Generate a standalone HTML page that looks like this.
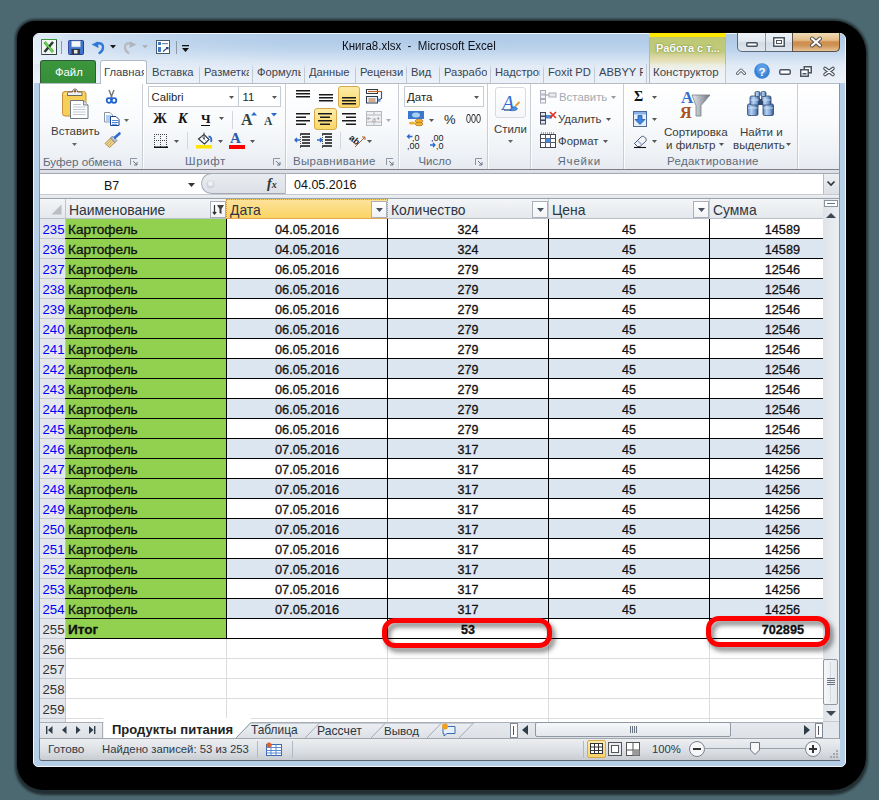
<!DOCTYPE html><html><head><meta charset="utf-8"><style>
*{margin:0;padding:0;box-sizing:border-box}
html,body{width:879px;height:800px;overflow:hidden;background:#4c6870;font-family:"Liberation Sans",sans-serif}
.a{position:absolute}
.t{position:absolute;white-space:nowrap;line-height:1}
svg{position:absolute;overflow:visible}
</style></head><body><div class="a" style="left:15px;top:19px;width:853px;height:776px;background:rgba(0,0,0,.55);border-radius:20px 34px 36px 28px;filter:blur(.8px)"></div>
<div class="a" style="left:17px;top:21px;width:849px;height:769px;background:#000;border-radius:18px 32px 34px 26px"></div>
<div class="a" style="left:33px;top:33px;width:813px;height:734px;background:#b6cfe9;border-radius:6px 6px 5px 5px;border:1px solid #f2f6fb"></div>
<div class="a" style="left:34px;top:34px;width:811px;height:49px;background:linear-gradient(#afcae7 0,#b3cde9 9px,#bfd5ed 17px,#d0e0f1 24px,#e2ebf6 32px,#edf2f9 49px);border-radius:5px 5px 0 0"></div>
<div class="a" style="left:34px;top:34px;width:811px;height:30px;background:linear-gradient(90deg,rgba(235,242,250,.85) 0,rgba(235,242,250,.55) 40px,rgba(235,242,250,.2) 150px,rgba(235,242,250,0) 260px);border-radius:5px 5px 0 0"></div>
<svg style="left:41px;top:39px" width="16" height="16" viewBox="0 0 16 16"><rect x="0.5" y="0.5" width="15" height="15" fill="#f4f6f4" stroke="#3a9a3a"/><path d="M15.5 1V15.5H1" fill="none" stroke="#2d4040"/><path d="M3.5 3L12 13" stroke="#46b246" stroke-width="2.8"/><path d="M12 3L3.5 13" stroke="#2a3d36" stroke-width="2.6"/><path d="M4 3.5L11.5 12.5" stroke="#7bd85a" stroke-width="1.2"/></svg>
<div class="a" style="left:61px;top:41px;width:1px;height:13px;background:#8e9aa6"></div>
<svg style="left:68px;top:40px" width="16" height="15" viewBox="0 0 16 15"><rect x="0.5" y="0.5" width="15" height="14" rx="1" fill="#3f74cf" stroke="#1f3f8f"/><rect x="3.5" y="1" width="9" height="6" fill="#f4f7fb" stroke="#8fa8d0" stroke-width=".6"/><rect x="3.5" y="9" width="8.5" height="5.5" fill="#33383f"/><rect x="6" y="10" width="3.5" height="3.5" fill="#e8e8e8"/><path d="M1 1V14" stroke="#a070e0" stroke-width=".8" opacity=".6"/></svg>
<svg style="left:91px;top:41px" width="14" height="13" viewBox="0 0 14 13"><path d="M6 2.5C10 1.5 12.5 3.5 12 7C11.6 9.8 10 11.2 8.5 12" fill="none" stroke="#2f78d8" stroke-width="2.4" stroke-linecap="round"/><path d="M0.5 3.5L7 0.5L7.5 7Z" fill="#2f78d8"/></svg>
<svg style="left:110px;top:45px" width="6" height="4" viewBox="0 0 6 4"><path d="M0 0H6L3 3.5Z" fill="#1a1a1a"/></svg>
<svg style="left:123px;top:41px" width="14" height="13" viewBox="0 0 14 13"><path d="M8 2.5C4 1.5 1.5 3.5 2 7C2.4 9.8 4 11.2 5.5 12" fill="none" stroke="#b8bcc2" stroke-width="2.4" stroke-linecap="round"/><path d="M13.5 3.5L7 0.5L6.5 7Z" fill="#b0b5bc"/></svg>
<svg style="left:142px;top:45px" width="6" height="4" viewBox="0 0 6 4"><path d="M0 0H6L3 3.5Z" fill="#aab2ba"/></svg>
<svg style="left:156px;top:40px" width="14" height="14" viewBox="0 0 14 14"><rect x="0.5" y="0.5" width="13" height="13" fill="#fff" stroke="#4a5a6a"/><rect x="2" y="2" width="3" height="3" fill="#3a78c8"/><rect x="6" y="3" width="6" height="1.2" fill="#7a8aa0"/><rect x="2" y="7" width="3" height="5" fill="#3a78c8"/><path d="M7 11.5L12 7.5M10 7.5H12V9.5" stroke="#2a4a80" fill="none" stroke-width="1.1"/></svg>
<div class="a" style="left:176px;top:41px;width:1px;height:13px;background:#8e9aa6"></div>
<svg style="left:182px;top:45px" width="7" height="8" viewBox="0 0 7 8"><rect x="0" y="0" width="7" height="1.3" fill="#111"/><path d="M0 3H7L3.5 7Z" fill="#111"/></svg>
<div class="t" style="left:341.5px;top:40px;font-size:12.5px;color:#0c1018;font-weight:normal;transform:scaleX(.92);transform-origin:0 0">Книга8.xlsx&nbsp; - &nbsp;Microsoft Excel</div>
<div class="a" style="left:649px;top:33px;width:77px;height:4px;background:#ffe800"></div>
<div class="a" style="left:649px;top:37px;width:77px;height:46px;background:linear-gradient(#bdc874 0,#c1cb7b 15px,#d2d39a 18px,#e1dcae 22px,#e6e2c0 25px,#eceee0 28px,#eef1f2 33px,#f1f4f7 46px)"></div>
<div class="a" style="left:649px;top:37px;width:1px;height:46px;background:#b5c080"></div>
<div class="a" style="left:725px;top:37px;width:1px;height:46px;background:#b5c080"></div>
<div class="t" style="left:656px;top:42.5px;font-size:11px;color:#fff;font-weight:bold;text-shadow:0 0 2px #7d8c3a,0 0 1px #7d8c3a">Работа с т...</div>
<div class="a" style="left:737px;top:33px;width:103px;height:19px;background:linear-gradient(#eef2f7,#e3e9f0 45%,#d3dce6 55%,#dfe6ee);border:1px solid #5f6b78;border-top:none;border-radius:0 0 5px 5px"></div>
<div class="a" style="left:765px;top:33px;width:1px;height:18px;background:#8a96a4"></div>
<div class="a" style="left:792px;top:33px;width:48px;height:19px;background:linear-gradient(#efdcb4,#e4bd88 40%,#cf8c4c 50%,#cf9458 70%,#e6c496);border:1px solid #5f5048;border-top:none;border-radius:0 0 5px 0"></div>
<svg style="left:746px;top:42px" width="12" height="5" viewBox="0 0 12 5"><rect x="0.75" y="0.75" width="10.5" height="3.5" rx="1" fill="#fff" stroke="#4a5560" stroke-width="1.5"/></svg>
<svg style="left:773px;top:37px" width="12" height="10" viewBox="0 0 12 10"><rect x="0.75" y="0.75" width="10.5" height="8.5" fill="#fff" stroke="#4a5560" stroke-width="1.5"/><rect x="3.5" y="3.5" width="5" height="3" fill="#fff" stroke="#4a5560"/></svg>
<svg style="left:810px;top:37px" width="12" height="10" viewBox="0 0 12 10"><path d="M2 1.5L10 8.5M10 1.5L2 8.5" stroke="#4a4a50" stroke-width="4" stroke-linecap="round"/><path d="M2 1.5L10 8.5M10 1.5L2 8.5" stroke="#fff" stroke-width="2.2" stroke-linecap="round"/></svg>
<div class="a" style="left:40px;top:60px;width:56px;height:24px;background:linear-gradient(#3c963d,#358e38);border:1px solid #2f5a3a;border-bottom:none;border-radius:3px 3px 0 0"></div>
<div class="t" style="left:55px;top:66.5px;font-size:11.3px;color:#fff;font-weight:normal;">Файл</div>
<div class="a" style="left:39px;top:83px;width:801px;height:87px;background:linear-gradient(#ffffff 0,#f8fafc 40px,#eef1f5 70px,#e6eaf0 86px);border:1px solid #8f949b;border-top:1px solid #b6bcc6;border-bottom:1px solid #7f7d86;border-radius:0"></div>
<div class="a" style="left:100px;top:60px;width:47px;height:24px;background:#fff;border:1px solid #b6bcc6;border-bottom:none;border-radius:3px 3px 0 0"></div>
<div class="t" style="left:104px;top:66.5px;font-size:11.3px;color:#3a4450;font-weight:normal;"><span style="display:inline-block;width:40px;overflow:hidden">Главная</span></div>
<div class="t" style="left:152px;top:66.5px;font-size:11.2px;color:#3a4450;font-weight:normal;"><span style="display:inline-block;width:44px;overflow:hidden">Вставка</span></div>
<div class="a" style="left:199px;top:64px;width:1px;height:19px;background:linear-gradient(rgba(180,190,205,0),#c2c9d3 30%,#c2c9d3)"></div>
<div class="t" style="left:204px;top:66.5px;font-size:11.2px;color:#3a4450;font-weight:normal;"><span style="display:inline-block;width:45px;overflow:hidden">Разметка</span></div>
<div class="a" style="left:252px;top:64px;width:1px;height:19px;background:linear-gradient(rgba(180,190,205,0),#c2c9d3 30%,#c2c9d3)"></div>
<div class="t" style="left:257px;top:66.5px;font-size:11.2px;color:#3a4450;font-weight:normal;"><span style="display:inline-block;width:44px;overflow:hidden">Формулы</span></div>
<div class="a" style="left:304px;top:64px;width:1px;height:19px;background:linear-gradient(rgba(180,190,205,0),#c2c9d3 30%,#c2c9d3)"></div>
<div class="t" style="left:309px;top:66.5px;font-size:11.2px;color:#3a4450;font-weight:normal;"><span style="display:inline-block;width:43px;overflow:hidden">Данные</span></div>
<div class="a" style="left:355px;top:64px;width:1px;height:19px;background:linear-gradient(rgba(180,190,205,0),#c2c9d3 30%,#c2c9d3)"></div>
<div class="t" style="left:360px;top:66.5px;font-size:11.2px;color:#3a4450;font-weight:normal;"><span style="display:inline-block;width:43px;overflow:hidden">Рецензирование</span></div>
<div class="a" style="left:406px;top:64px;width:1px;height:19px;background:linear-gradient(rgba(180,190,205,0),#c2c9d3 30%,#c2c9d3)"></div>
<div class="t" style="left:411px;top:66.5px;font-size:11.2px;color:#3a4450;font-weight:normal;"><span style="display:inline-block;width:25px;overflow:hidden">Вид</span></div>
<div class="a" style="left:439px;top:64px;width:1px;height:19px;background:linear-gradient(rgba(180,190,205,0),#c2c9d3 30%,#c2c9d3)"></div>
<div class="t" style="left:444px;top:66.5px;font-size:11.2px;color:#3a4450;font-weight:normal;"><span style="display:inline-block;width:43px;overflow:hidden">Разработчик</span></div>
<div class="a" style="left:490px;top:64px;width:1px;height:19px;background:linear-gradient(rgba(180,190,205,0),#c2c9d3 30%,#c2c9d3)"></div>
<div class="t" style="left:495px;top:66.5px;font-size:11.2px;color:#3a4450;font-weight:normal;"><span style="display:inline-block;width:45px;overflow:hidden">Надстройки</span></div>
<div class="a" style="left:543px;top:64px;width:1px;height:19px;background:linear-gradient(rgba(180,190,205,0),#c2c9d3 30%,#c2c9d3)"></div>
<div class="t" style="left:548px;top:66.5px;font-size:11.2px;color:#3a4450;font-weight:normal;"><span style="display:inline-block;width:43px;overflow:hidden">Foxit PDF</span></div>
<div class="a" style="left:594px;top:64px;width:1px;height:19px;background:linear-gradient(rgba(180,190,205,0),#c2c9d3 30%,#c2c9d3)"></div>
<div class="t" style="left:599px;top:66.5px;font-size:11.2px;color:#3a4450;font-weight:normal;"><span style="display:inline-block;width:44px;overflow:hidden">ABBYY PDF</span></div>
<div class="a" style="left:646px;top:64px;width:1px;height:19px;background:#c2c9d3"></div>
<div class="a" style="left:725px;top:64px;width:1px;height:19px;background:#c2c9d3"></div>
<div class="t" style="left:653px;top:66.5px;font-size:11.5px;color:#3a4450;font-weight:normal;">Конструктор</div>
<svg style="left:736px;top:68px" width="10" height="7" viewBox="0 0 10 7"><path d="M1.5 5.5L5 2L8.5 5.5" fill="none" stroke="#4a5560" stroke-width="3" stroke-linecap="round" stroke-linejoin="round"/><path d="M1.5 5.5L5 2L8.5 5.5" fill="none" stroke="#fff" stroke-width="1.2" stroke-linecap="round" stroke-linejoin="round"/></svg>
<svg style="left:754px;top:63px" width="16" height="16" viewBox="0 0 16 16"><circle cx="8" cy="8" r="7.8" fill="#3a84d8"/><circle cx="8" cy="6" r="5.5" fill="#7ab4ee" opacity=".5"/><text x="8" y="12.5" font-size="11.5" font-weight="bold" text-anchor="middle" fill="#fff" font-family="Liberation Sans">?</text></svg>
<svg style="left:779px;top:69px" width="12" height="6" viewBox="0 0 12 6"><rect x="0.75" y="0.75" width="10.5" height="4.5" rx="1.5" fill="#fff" stroke="#4a5560" stroke-width="1.5"/></svg>
<svg style="left:800px;top:66px" width="12" height="11" viewBox="0 0 12 11"><rect x="4.25" y="0.75" width="7" height="6" fill="#fff" stroke="#4a5560" stroke-width="1.5"/><rect x="0.75" y="3.75" width="7.5" height="6.5" fill="#fff" stroke="#4a5560" stroke-width="1.5"/><rect x="2.5" y="7" width="4" height="1.5" fill="#4a5560"/></svg>
<svg style="left:823px;top:67px" width="12" height="9" viewBox="0 0 12 9"><path d="M2 1.5L10 7.5M10 1.5L2 7.5" stroke="#4a5560" stroke-width="3.6" stroke-linecap="round"/><path d="M2 1.5L10 7.5M10 1.5L2 7.5" stroke="#fff" stroke-width="1.5" stroke-linecap="round"/></svg>
<div class="a" style="left:142px;top:84px;width:1px;height:85px;background:#c9ced5"></div>
<div class="a" style="left:143px;top:84px;width:1px;height:85px;background:rgba(255,255,255,.8)"></div>
<div class="a" style="left:285px;top:84px;width:1px;height:85px;background:#c9ced5"></div>
<div class="a" style="left:286px;top:84px;width:1px;height:85px;background:rgba(255,255,255,.8)"></div>
<div class="a" style="left:398px;top:84px;width:1px;height:85px;background:#c9ced5"></div>
<div class="a" style="left:399px;top:84px;width:1px;height:85px;background:rgba(255,255,255,.8)"></div>
<div class="a" style="left:487px;top:84px;width:1px;height:85px;background:#c9ced5"></div>
<div class="a" style="left:488px;top:84px;width:1px;height:85px;background:rgba(255,255,255,.8)"></div>
<div class="a" style="left:530px;top:84px;width:1px;height:85px;background:#c9ced5"></div>
<div class="a" style="left:531px;top:84px;width:1px;height:85px;background:rgba(255,255,255,.8)"></div>
<div class="a" style="left:623px;top:84px;width:1px;height:85px;background:#c9ced5"></div>
<div class="a" style="left:624px;top:84px;width:1px;height:85px;background:rgba(255,255,255,.8)"></div>
<div class="a" style="left:797px;top:84px;width:1px;height:85px;background:#c9ced5"></div>
<div class="a" style="left:798px;top:84px;width:1px;height:85px;background:rgba(255,255,255,.8)"></div>
<svg style="left:61px;top:88px" width="29" height="32" viewBox="0 0 29 32">
<rect x="1.5" y="3.5" width="23.5" height="24.5" rx="2.5" fill="#f6cf58" stroke="#c8903c"/>
<path d="M3 6H23" stroke="#fbe39a"/>
<path d="M6.5 7.5V5.5C6.5 4.5 7 4 8 4H11.5C11.5 2 12.5 1 14 1C15.5 1 16.5 2 16.5 4H19.5C20.5 4 21 4.5 21 5.5V7.5Z" fill="#f2f2f2" stroke="#5a5a5a" stroke-width=".9"/>
<circle cx="14" cy="3.2" r="1.2" fill="#b04a20"/>
<path d="M9.5 12.5H22.5L27 17V30.5H9.5Z" fill="#fff" stroke="#5f6a78" stroke-width=".9"/>
<path d="M22.5 12.5V17H27" fill="#dde4ec" stroke="#5f6a78" stroke-width=".8"/>
<path d="M12 16.5H20M12 19H24.5M12 21.5H24.5M12 24H24.5M12 26.5H24.5" stroke="#b9c1cc" stroke-width=".9"/>
</svg>
<div class="t" style="left:51px;top:126px;font-size:11.5px;color:#3c3c3c;font-weight:normal;">Вставить</div>
<svg style="left:72px;top:143px" width="5" height="3" viewBox="0 0 5 3"><path d="M0 0H5L2.5 3Z" fill="#666"/></svg>
<svg style="left:106px;top:89px" width="11" height="15" viewBox="0 0 11 15"><path d="M3 1L6.2 9M8 1L4.8 9" stroke="#707478" stroke-width="1.4"/><circle cx="3" cy="11.5" r="2.3" fill="none" stroke="#1f62d0" stroke-width="1.8"/><circle cx="8" cy="11.5" r="2.3" fill="none" stroke="#1f62d0" stroke-width="1.8"/></svg>
<svg style="left:104px;top:112px" width="16" height="14" viewBox="0 0 16 14"><path d="M0.5 0.5H6L8.5 3V10H0.5Z" fill="#fff" stroke="#7d8a9a" stroke-width=".9"/><path d="M2 4H7M2 6H7M2 8H6" stroke="#4a90e0" stroke-width=".9"/><path d="M6.5 4.5H12L15 7.5V13.5H6.5Z" fill="#fff" stroke="#1a3f96" stroke-width="1"/><path d="M8 8.5H14M8 10.5H14M8 12.3H13" stroke="#3a7ad8" stroke-width=".9"/></svg>
<svg style="left:124px;top:119px" width="5" height="3" viewBox="0 0 5 3"><path d="M0 0H5L2.5 3Z" fill="#666"/></svg>
<svg style="left:104px;top:133px" width="17" height="15" viewBox="0 0 17 15"><path d="M1 10.5L6.5 5L11 9.5L5.5 14.5C4 13 2.5 12 1 10.5Z" fill="#ecd089" stroke="#a27a3a" stroke-width=".8"/><path d="M3 11L7 7M4.5 12.5L8.5 8.5" stroke="#c9a050" stroke-width=".7"/><path d="M6.5 5L8.5 3L13 7.5L11 9.5Z" fill="#c0c6ce" stroke="#6a7280" stroke-width=".8"/><path d="M11 4.5L15.5 0.5" stroke="#2f6ad0" stroke-width="2.6" stroke-linecap="round"/></svg>
<div class="t" style="left:43px;top:156px;font-size:11.6px;color:#5e6b7c;font-weight:normal;">Буфер обмена</div>
<svg style="left:130px;top:158px" width="8" height="8" viewBox="0 0 8 8"><path d="M0.5 7V0.5H7" fill="none" stroke="#8a96a4"/><path d="M3 3L7 7M7 4V7H4" fill="none" stroke="#6a7684"/></svg>
<div class="a" style="left:148px;top:86px;width:91px;height:21px;background:#fff;border:1px solid #c6ccd4"></div>
<div class="a" style="left:238px;top:86px;width:43px;height:21px;background:#fff;border:1px solid #c6ccd4"></div>
<div class="t" style="left:151.5px;top:91.5px;font-size:11.3px;color:#1e1e1e;font-weight:normal;">Calibri</div>
<svg style="left:229px;top:96px" width="5" height="3" viewBox="0 0 5 3"><path d="M0 0H5L2.5 3Z" fill="#555"/></svg>
<div class="t" style="left:242.5px;top:91.5px;font-size:11.3px;color:#1e1e1e;font-weight:normal;">11</div>
<svg style="left:272px;top:96px" width="5" height="3" viewBox="0 0 5 3"><path d="M0 0H5L2.5 3Z" fill="#555"/></svg>
<div class="t" style="left:153px;top:112px;font-size:14px;color:#1a1a1a;font-weight:bold;font-family:Liberation Serif">Ж</div>
<div class="t" style="left:178px;top:112px;font-size:14px;color:#111;font-weight:bold;font-family:Liberation Serif;font-style:italic">К</div>
<div class="t" style="left:201px;top:112px;font-size:13px;color:#111;font-weight:bold;font-family:Liberation Serif">Ч</div>
<div class="a" style="left:201px;top:125px;width:9px;height:1px;background:#111"></div>
<svg style="left:219px;top:117px" width="5" height="3" viewBox="0 0 5 3"><path d="M0 0H5L2.5 3Z" fill="#555"/></svg>
<div class="a" style="left:232px;top:111px;width:1px;height:18px;background:#d3d8de"></div>
<div class="t" style="left:241px;top:112px;font-size:16px;color:#2c4446;font-weight:bold;font-family:Liberation Serif">A</div>
<svg style="left:251px;top:112px" width="6" height="4" viewBox="0 0 6 4"><path d="M0 3.5L3 0L6 3.5Z" fill="#2a6ad0"/></svg>
<div class="t" style="left:264px;top:116px;font-size:11.5px;color:#2c4446;font-weight:bold;font-family:Liberation Serif">A</div>
<svg style="left:271px;top:113px" width="6" height="4" viewBox="0 0 6 4"><path d="M0 0H6L3 3.5Z" fill="#2a6ad0"/></svg>
<svg style="left:154px;top:134px" width="14" height="14" viewBox="0 0 14 14"><rect x="0" y="0" width="1" height="1" fill="#444"/><rect x="2" y="0" width="1" height="1" fill="#444"/><rect x="4" y="0" width="1" height="1" fill="#444"/><rect x="6" y="0" width="1" height="1" fill="#444"/><rect x="8" y="0" width="1" height="1" fill="#444"/><rect x="10" y="0" width="1" height="1" fill="#444"/><rect x="12" y="0" width="1" height="1" fill="#444"/><rect x="0" y="2" width="1" height="1" fill="#444"/><rect x="6" y="2" width="1" height="1" fill="#444"/><rect x="12" y="2" width="1" height="1" fill="#444"/><rect x="0" y="4" width="1" height="1" fill="#444"/><rect x="6" y="4" width="1" height="1" fill="#444"/><rect x="12" y="4" width="1" height="1" fill="#444"/><rect x="0" y="6" width="1" height="1" fill="#444"/><rect x="2" y="6" width="1" height="1" fill="#444"/><rect x="4" y="6" width="1" height="1" fill="#444"/><rect x="6" y="6" width="1" height="1" fill="#444"/><rect x="8" y="6" width="1" height="1" fill="#444"/><rect x="10" y="6" width="1" height="1" fill="#444"/><rect x="12" y="6" width="1" height="1" fill="#444"/><rect x="0" y="8" width="1" height="1" fill="#444"/><rect x="6" y="8" width="1" height="1" fill="#444"/><rect x="12" y="8" width="1" height="1" fill="#444"/><rect x="0" y="10" width="1" height="1" fill="#444"/><rect x="6" y="10" width="1" height="1" fill="#444"/><rect x="12" y="10" width="1" height="1" fill="#444"/><rect x="0" y="12" width="1" height="1" fill="#444"/><rect x="6" y="12" width="1" height="1" fill="#444"/><rect x="12" y="12" width="1" height="1" fill="#444"/><rect x="0" y="12.5" width="14" height="1.5" fill="#111"/></svg>
<svg style="left:174px;top:140px" width="5" height="3" viewBox="0 0 5 3"><path d="M0 0H5L2.5 3Z" fill="#555"/></svg>
<div class="a" style="left:187px;top:132px;width:1px;height:17px;background:#d3d8de"></div>
<svg style="left:196px;top:132px" width="17" height="17" viewBox="0 0 17 17"><path d="M2.5 7L8 2.5L13 7.5L8.5 12Z" fill="#fff" stroke="#2a3440" stroke-width="1.1"/><path d="M5.5 4.5L10 9" stroke="#9ab" stroke-width=".8"/><path d="M8 0.5V6" stroke="#555" stroke-width="1"/><circle cx="8" cy="6.5" r="1" fill="#555"/><path d="M12.5 4.5C15 4.5 16 7 15 10" stroke="#2a6ad0" stroke-width="1.8" fill="none"/><rect x="0" y="13" width="16" height="3.5" fill="#ffe500"/></svg>
<svg style="left:218px;top:140px" width="5" height="3" viewBox="0 0 5 3"><path d="M0 0H5L2.5 3Z" fill="#555"/></svg>
<div class="t" style="left:230px;top:131px;font-size:15px;color:#2a5aa8;font-weight:bold;font-family:Liberation Serif">A</div>
<div class="a" style="left:229px;top:145px;width:16px;height:3.5px;background:#f00"></div>
<svg style="left:250px;top:140px" width="5" height="3" viewBox="0 0 5 3"><path d="M0 0H5L2.5 3Z" fill="#555"/></svg>
<div class="t" style="left:185px;top:156px;font-size:11.5px;color:#5e6b7c;font-weight:normal;letter-spacing:.6px">Шрифт</div>
<svg style="left:273px;top:158px" width="8" height="8" viewBox="0 0 8 8"><path d="M0.5 7V0.5H7" fill="none" stroke="#8a96a4"/><path d="M3 3L7 7M7 4V7H4" fill="none" stroke="#6a7684"/></svg>
<svg style="left:296px;top:90px" width="14" height="11" viewBox="0 0 14 11"><rect x="0" y="0.0" width="14" height="1.5" fill="#1a1a1a"/><rect x="0" y="3.0" width="14" height="1.5" fill="#1a1a1a"/><rect x="0" y="6.0" width="14" height="1.5" fill="#1a1a1a"/></svg>
<svg style="left:319px;top:94px" width="14" height="11" viewBox="0 0 14 11"><rect x="0" y="0.0" width="14" height="1.5" fill="#1a1a1a"/><rect x="0" y="3.0" width="14" height="1.5" fill="#1a1a1a"/><rect x="0" y="6.0" width="14" height="1.5" fill="#1a1a1a"/></svg>
<div class="a" style="left:338px;top:86px;width:22px;height:22px;background:linear-gradient(#fdeca6,#fbd667);border:1px solid #d7a94a;border-radius:3px"></div>
<svg style="left:342px;top:97px" width="14" height="11" viewBox="0 0 14 11"><rect x="0" y="0.0" width="14" height="1.5" fill="#1a1a1a"/><rect x="0" y="3.0" width="14" height="1.5" fill="#1a1a1a"/><rect x="0" y="6.0" width="14" height="1.5" fill="#1a1a1a"/></svg>
<svg style="left:366px;top:89px" width="17" height="15" viewBox="0 0 17 15"><rect x="0.5" y="0.5" width="11" height="4" fill="#fff" stroke="#2a3a4a"/><path d="M2 2.5H16" stroke="#c8641e" stroke-width="1.2"/><rect x="0.5" y="7.5" width="11" height="6.5" fill="#e6f0fb" stroke="#2a3a4a"/><path d="M2.5 10H9.5M2.5 12H9.5" stroke="#c8641e" stroke-width="1.1"/><path d="M15.5 3V9.5L13 11" stroke="#2a5aa0" fill="none" stroke-width="1.2"/><path d="M12 9.5V12H14.5" stroke="#2a5aa0" fill="none" stroke-width="1.2"/></svg>
<svg style="left:296px;top:113px" width="14" height="16.0" viewBox="0 0 14 16.0"><rect x="0" y="0.0" width="14" height="1.5" fill="#1a1a1a"/><rect x="0" y="3.5" width="10" height="1.5" fill="#1a1a1a"/><rect x="0" y="7.0" width="14" height="1.5" fill="#1a1a1a"/><rect x="0" y="10.5" width="10" height="1.5" fill="#1a1a1a"/></svg>
<div class="a" style="left:314px;top:108px;width:23px;height:22px;background:linear-gradient(#fdeca6,#fbd667);border:1px solid #d7a94a;border-radius:3px"></div>
<svg style="left:318px;top:113px" width="14" height="16.0" viewBox="0 0 14 16.0"><rect x="0.0" y="0.0" width="14" height="1.5" fill="#1a1a1a"/><rect x="2.0" y="3.5" width="10" height="1.5" fill="#1a1a1a"/><rect x="0.0" y="7.0" width="14" height="1.5" fill="#1a1a1a"/><rect x="2.0" y="10.5" width="10" height="1.5" fill="#1a1a1a"/></svg>
<svg style="left:342px;top:113px" width="14" height="16.0" viewBox="0 0 14 16.0"><rect x="0" y="0.0" width="14" height="1.5" fill="#1a1a1a"/><rect x="4" y="3.5" width="10" height="1.5" fill="#1a1a1a"/><rect x="0" y="7.0" width="14" height="1.5" fill="#1a1a1a"/><rect x="4" y="10.5" width="10" height="1.5" fill="#1a1a1a"/></svg>
<svg style="left:366px;top:111px" width="16" height="15" viewBox="0 0 16 15"><rect x="0.5" y="0.5" width="15" height="14" fill="#eef0f2" stroke="#b4b9bf"/><path d="M0.5 4H15.5M0.5 11H15.5M8 0.5V4M8 11V14.5" stroke="#b4b9bf"/><text x="8" y="10.5" font-size="9" text-anchor="middle" fill="#9aa0a6" font-family="Liberation Serif">a</text><path d="M1.5 7.5H5M13 7.5H11M2.5 6L1.5 7.5L2.5 9M12 6L13 7.5L12 9" stroke="#9aa0a6" fill="none" stroke-width=".8"/></svg>
<svg style="left:386px;top:119px" width="5" height="3" viewBox="0 0 5 3"><path d="M0 0H5L2.5 3Z" fill="#aab"/></svg>
<svg style="left:295px;top:133px" width="16" height="15" viewBox="0 0 16 15"><path d="M5 1H15M7 4H15M7 7H15M7 10H15M5 13H15" stroke="#111" stroke-width="1.5"/><path d="M0 7H5M2 5L0 7L2 9" stroke="#2a6ad0" stroke-width="1.4" fill="none"/><path d="M5.5 0V15" stroke="#555" stroke-dasharray="1 1"/></svg>
<svg style="left:317px;top:133px" width="16" height="15" viewBox="0 0 16 15"><path d="M5 1H15M8 4H15M8 7H15M8 10H15M5 13H15" stroke="#111" stroke-width="1.5"/><path d="M0 7H5M3 5L5 7L3 9" stroke="#2a6ad0" stroke-width="1.4" fill="none"/><path d="M5.5 0V15" stroke="#555" stroke-dasharray="1 1"/></svg>
<div class="a" style="left:340px;top:132px;width:1px;height:17px;background:#d3d8de"></div>
<svg style="left:349px;top:133px" width="17" height="15" viewBox="0 0 17 15"><text x="1" y="10" font-size="9" font-weight="bold" fill="#222" transform="rotate(40 6 6)" font-family="Liberation Sans">ab</text><path d="M6 14L16 4M13 4H16V7" stroke="#b06040" fill="none"/></svg>
<svg style="left:367px;top:140px" width="5" height="3" viewBox="0 0 5 3"><path d="M0 0H5L2.5 3Z" fill="#555"/></svg>
<div class="t" style="left:293px;top:156px;font-size:11.5px;color:#5e6b7c;font-weight:normal;letter-spacing:.3px">Выравнивание</div>
<svg style="left:386px;top:158px" width="8" height="8" viewBox="0 0 8 8"><path d="M0.5 7V0.5H7" fill="none" stroke="#8a96a4"/><path d="M3 3L7 7M7 4V7H4" fill="none" stroke="#6a7684"/></svg>
<div class="a" style="left:404px;top:86px;width:80px;height:21px;background:#fff;border:1px solid #c6ccd4"></div>
<div class="t" style="left:407px;top:91.5px;font-size:11.5px;color:#1e1e1e;font-weight:normal;">Дата</div>
<svg style="left:474px;top:96px" width="5" height="3" viewBox="0 0 5 3"><path d="M0 0H5L2.5 3Z" fill="#555"/></svg>
<svg style="left:408px;top:111px" width="17" height="16" viewBox="0 0 17 16"><rect x="0" y="0" width="16" height="8" fill="#3a78d0"/><ellipse cx="8" cy="4" rx="4" ry="2.5" fill="#a8cff5"/><ellipse cx="11" cy="10" rx="4" ry="1.8" fill="#f0b030" stroke="#a06a10" stroke-width=".6"/><ellipse cx="11" cy="13" rx="4" ry="1.8" fill="#f0b030" stroke="#a06a10" stroke-width=".6"/><ellipse cx="4" cy="12" rx="3" ry="1.5" fill="#f0b030"/></svg>
<svg style="left:429px;top:119px" width="5" height="3" viewBox="0 0 5 3"><path d="M0 0H5L2.5 3Z" fill="#555"/></svg>
<div class="t" style="left:444px;top:113px;font-size:13px;color:#222;font-weight:normal;">%</div>
<div class="t" style="left:466px;top:113px;font-size:12.5px;color:#222;font-weight:normal;transform:scaleX(.72);transform-origin:0 0">000</div>
<svg style="left:407px;top:133px" width="17" height="16" viewBox="0 0 17 16"><path d="M0.5 3.5H5.5M2.5 1.5L0.5 3.5L2.5 5.5" stroke="#2a6ad0" stroke-width="1.3" fill="none"/><text x="5" y="7.5" font-size="9" fill="#222" font-family="Liberation Sans">,0</text><text x="0" y="15.5" font-size="9" fill="#222" font-family="Liberation Sans">,00</text></svg>
<svg style="left:430px;top:133px" width="17" height="16" viewBox="0 0 17 16"><text x="1" y="7.5" font-size="9" fill="#222" font-family="Liberation Sans">,00</text><path d="M0 12H5M3 10L5 12L3 14" stroke="#2a6ad0" stroke-width="1.3" fill="none"/><text x="6" y="15.5" font-size="9" fill="#222" font-family="Liberation Sans">,0</text></svg>
<div class="t" style="left:418.5px;top:156px;font-size:11.4px;color:#5e6b7c;font-weight:normal;">Число</div>
<svg style="left:475px;top:158px" width="8" height="8" viewBox="0 0 8 8"><path d="M0.5 7V0.5H7" fill="none" stroke="#8a96a4"/><path d="M3 3L7 7M7 4V7H4" fill="none" stroke="#6a7684"/></svg>
<div class="a" style="left:495px;top:87px;width:31px;height:31px;background:linear-gradient(#fff,#f4f6f9);border:1px solid #d6dbe2;border-radius:3px"></div>
<svg style="left:502px;top:94px" width="20" height="18" viewBox="0 0 20 18"><text x="0" y="16" font-size="20" fill="#2f6ad0" font-style="italic" font-family="Liberation Serif">A</text><path d="M2 16H10" stroke="#1f3f80" stroke-width="1.2"/><path d="M8 16.5C9 14 11 12.5 13 12.5L15.5 14.5C15 16.5 12 17 8 16.5Z" fill="#4a8ee0" stroke="#2a5aa8" stroke-width=".6"/><path d="M13.5 12L17.5 8" stroke="#e49a30" stroke-width="1.8"/></svg>
<div class="t" style="left:494px;top:124px;font-size:11.4px;color:#3c3c3c;font-weight:normal;">Стили</div>
<svg style="left:508px;top:140px" width="5" height="3" viewBox="0 0 5 3"><path d="M0 0H5L2.5 3Z" fill="#666"/></svg>
<svg style="left:540px;top:90px" width="17" height="14" viewBox="0 0 17 14"><rect x="0.5" y="0.5" width="5" height="3.5" fill="#f4f4f4" stroke="#aab"/><rect x="0.5" y="5" width="5" height="3.5" fill="#f4f4f4" stroke="#aab"/><rect x="0.5" y="9.5" width="5" height="3.5" fill="#f4f4f4" stroke="#aab"/><rect x="9" y="3" width="7" height="4" fill="#e8eaec" stroke="#aab"/><path d="M5 5H9" stroke="#99a"/></svg>
<div class="t" style="left:559px;top:92px;font-size:11.4px;color:#a4abb4;font-weight:normal;">Вставить</div>
<svg style="left:611px;top:96px" width="5" height="3" viewBox="0 0 5 3"><path d="M0 0H5L2.5 3Z" fill="#999"/></svg>
<svg style="left:540px;top:112px" width="17" height="13" viewBox="0 0 17 13"><rect x="0.5" y="0.5" width="5" height="3.5" fill="#dde8f4" stroke="#445"/><rect x="0.5" y="4.5" width="5" height="3.5" fill="#dde8f4" stroke="#445"/><rect x="0.5" y="8.5" width="5" height="3.5" fill="#dde8f4" stroke="#445"/><rect x="6" y="3" width="6" height="3.5" fill="#4a8ad8"/><path d="M10 0L16 6M16 0L10 6" stroke="#e03020" stroke-width="1.6"/></svg>
<div class="t" style="left:558px;top:114px;font-size:11.4px;color:#3c3c3c;font-weight:normal;">Удалить</div>
<svg style="left:606px;top:118px" width="5" height="3" viewBox="0 0 5 3"><path d="M0 0H5L2.5 3Z" fill="#555"/></svg>
<svg style="left:540px;top:132px" width="16" height="17" viewBox="0 0 16 17"><rect x="0.5" y="2.5" width="15" height="13" fill="#fff" stroke="#445"/><path d="M0.5 6.5H15.5M0.5 10.5H15.5M5.5 2.5V15.5M10.5 2.5V15.5" stroke="#556"/><rect x="5.5" y="6.5" width="5" height="4" fill="#4a8ad8"/><path d="M1 1H15" stroke="#556" stroke-dasharray="1 1"/></svg>
<div class="t" style="left:558px;top:136px;font-size:11.4px;color:#3c3c3c;font-weight:normal;">Формат</div>
<svg style="left:603px;top:140px" width="5" height="3" viewBox="0 0 5 3"><path d="M0 0H5L2.5 3Z" fill="#555"/></svg>
<div class="t" style="left:557.5px;top:156px;font-size:11.5px;color:#5e6b7c;font-weight:normal;letter-spacing:.8px">Ячейки</div>
<div class="t" style="left:634px;top:90px;font-size:14px;color:#111;font-weight:bold;font-family:Liberation Serif">Σ</div>
<svg style="left:652px;top:96px" width="5" height="3" viewBox="0 0 5 3"><path d="M0 0H5L2.5 3Z" fill="#555"/></svg>
<svg style="left:633px;top:111px" width="14" height="16" viewBox="0 0 14 16"><rect x="0.5" y="0.5" width="13" height="15" fill="#e6effa" stroke="#4a6a9a"/><rect x="1" y="1" width="12" height="2.5" fill="#8ab4e8"/><path d="M5 4.5H9V8.5H12L7 13.5L2 8.5H5Z" fill="#3a86e0" stroke="#1a4a9a" stroke-width=".7"/></svg>
<svg style="left:652px;top:118px" width="5" height="3" viewBox="0 0 5 3"><path d="M0 0H5L2.5 3Z" fill="#555"/></svg>
<svg style="left:633px;top:134px" width="14" height="14" viewBox="0 0 14 14"><path d="M1.5 9.5L8 3C9 2 10.5 2 11.5 3L12.5 4C13.5 5 13.5 6.5 12.5 7.5L7 12.5H4.5Z" fill="#f2f6fb" stroke="#3a4a60" stroke-width=".9"/><path d="M1.5 9.5L4.5 12.5" stroke="#3a4a60"/><path d="M5 7L9 11" stroke="#9ab4d8" stroke-width="1.5"/><path d="M1 13.5H13" stroke="#111" stroke-width="1.1"/></svg>
<svg style="left:652px;top:140px" width="5" height="3" viewBox="0 0 5 3"><path d="M0 0H5L2.5 3Z" fill="#555"/></svg>
<svg style="left:680px;top:89px" width="31" height="30" viewBox="0 0 31 30"><defs><linearGradient id="fg" x1="0" y1="0" x2="1" y2="0"><stop offset="0" stop-color="#e8eaee"/><stop offset=".5" stop-color="#a9aeb6"/><stop offset="1" stop-color="#6e7580"/></linearGradient></defs>
<path d="M12 6H30L21 16.5V27H16V16.5Z" fill="url(#fg)" stroke="#7a8088" stroke-width=".8"/>
<text x="1" y="13.5" font-size="17" font-weight="bold" fill="#2f6fd0" font-family="Liberation Serif">A</text>
<text x="0" y="28.5" font-size="16" font-weight="bold" fill="#a8541e" font-family="Liberation Serif">Я</text></svg>
<div class="t" style="left:664px;top:126px;font-size:11.6px;color:#3c3c3c;font-weight:normal;">Сортировка</div>
<div class="t" style="left:666px;top:139px;font-size:11.6px;color:#3c3c3c;font-weight:normal;">и фильтр</div>
<svg style="left:719px;top:143px" width="5" height="3" viewBox="0 0 5 3"><path d="M0 0H5L2.5 3Z" fill="#555"/></svg>
<svg style="left:747px;top:91px" width="27" height="25" viewBox="0 0 27 25"><defs><linearGradient id="bg1" x1="0" y1="0" x2="1" y2="0"><stop offset="0" stop-color="#5b86c0"/><stop offset=".35" stop-color="#b9d3f0"/><stop offset=".7" stop-color="#7aa3d6"/><stop offset="1" stop-color="#34527e"/></linearGradient></defs>
<rect x="0.5" y="13" width="10.5" height="11.5" rx="1.5" fill="url(#bg1)" stroke="#2e4a70" stroke-width=".8"/>
<rect x="16" y="13" width="10.5" height="11.5" rx="1.5" fill="url(#bg1)" stroke="#2e4a70" stroke-width=".8"/>
<rect x="3" y="5" width="9.5" height="9" rx="1.5" fill="url(#bg1)" stroke="#2e4a70" stroke-width=".8"/>
<rect x="14.5" y="5" width="9.5" height="9" rx="1.5" fill="url(#bg1)" stroke="#2e4a70" stroke-width=".8"/>
<rect x="8" y="0.5" width="5" height="5" rx="1.5" fill="url(#bg1)" stroke="#2e4a70" stroke-width=".8"/>
<rect x="14" y="0.5" width="5" height="5" rx="1.5" fill="url(#bg1)" stroke="#2e4a70" stroke-width=".8"/>
<rect x="11" y="8" width="5" height="6" fill="#2e4a70"/>
<path d="M1 17H10.5M16.5 17H26M3.5 9H12M15 9H23.5" stroke="#dfeafa" stroke-width=".8"/></svg>
<div class="t" style="left:740px;top:126px;font-size:11.6px;color:#3c3c3c;font-weight:normal;">Найти и</div>
<div class="t" style="left:733px;top:139px;font-size:11.6px;color:#3c3c3c;font-weight:normal;">выделить</div>
<svg style="left:786px;top:143px" width="5" height="3" viewBox="0 0 5 3"><path d="M0 0H5L2.5 3Z" fill="#555"/></svg>
<div class="t" style="left:667px;top:156px;font-size:11.5px;color:#5e6b7c;font-weight:normal;letter-spacing:.3px">Редактирование</div>
<div class="a" style="left:39px;top:170px;width:801px;height:4px;background:linear-gradient(#dfe2e7,#dadee4);border-bottom:1px solid #a4aab3"></div>
<div class="a" style="left:39px;top:174px;width:801px;height:20px;background:#fff;border-left:1px solid #a9b0b9"></div>
<div class="t" style="left:104px;top:180px;font-size:12.5px;color:#111;font-weight:normal;">B7</div>
<svg style="left:188px;top:183px" width="7" height="4" viewBox="0 0 7 4"><path d="M0 0H7L3.5 4Z" fill="#333"/></svg>
<div class="a" style="left:201px;top:173px;width:85px;height:21px;background:linear-gradient(#e9ecf0,#dde1e7);border:1px solid #a3aab4;border-right:1px solid #b7bdc5;border-radius:11px 0 0 11px"></div>
<svg style="left:206px;top:180px" width="9" height="9" viewBox="0 0 9 9"><circle cx="4.5" cy="4.5" r="4" fill="#d0d5db"/><circle cx="4.5" cy="3.5" r="2.5" fill="#eef0f3"/></svg>
<div class="t" style="left:267px;top:177px;font-size:14px;color:#333;font-weight:bold;font-family:Liberation Serif"><i>f</i><span style="font-size:10px;font-style:italic;font-weight:bold">x</span></div>
<div class="t" style="left:294px;top:179px;font-size:12.5px;color:#111;font-weight:normal;">04.05.2016</div>
<div class="a" style="left:823px;top:174px;width:16px;height:20px;background:linear-gradient(#eceff3,#dde1e7);border-left:1px solid #b7bdc5"></div>
<svg style="left:827px;top:181px" width="8" height="5" viewBox="0 0 8 5"><path d="M0.5 0.5L4 4L7.5 0.5" fill="none" stroke="#333" stroke-width="1.6"/></svg>
<div class="a" style="left:39px;top:194px;width:801px;height:5px;background:linear-gradient(#eef0f3,#e2e6ea);border-top:1px solid #c5cad1;border-bottom:1px solid #9ba3ad"></div>
<div class="a" style="left:40px;top:199px;width:783px;height:523px;background:#fff"></div>
<div class="a" style="left:40px;top:199px;width:783px;height:20px;background:linear-gradient(#f3f5f7,#e5e8ec);border-bottom:1px solid #b9bfc7"></div>
<div class="a" style="left:40px;top:219px;width:25px;height:503px;background:#e4e7ec"></div>
<div class="a" style="left:65px;top:199px;width:1px;height:523px;background:#bfc5cd"></div>
<svg style="left:51px;top:204px" width="11" height="11" viewBox="0 0 11 11"><path d="M10.5 0.5V10.5H0.5Z" fill="#b9bec5"/></svg>
<div class="a" style="left:226px;top:199px;width:1px;height:20px;background:#c5cad2"></div>
<div class="a" style="left:387px;top:199px;width:1px;height:20px;background:#c5cad2"></div>
<div class="a" style="left:548px;top:199px;width:1px;height:20px;background:#c5cad2"></div>
<div class="a" style="left:709px;top:199px;width:1px;height:20px;background:#c5cad2"></div>
<div class="a" style="left:226px;top:199px;width:162px;height:20px;background:linear-gradient(#fde29a,#fbd464);border:1px dotted #d89a3a;border-bottom:1px solid #e2a74f"></div>
<div class="t" style="left:69px;top:204px;font-size:13.9px;color:#2c3644;font-weight:normal;">Наименование</div>
<div class="t" style="left:230px;top:204px;font-size:13.9px;color:#2c3644;font-weight:normal;">Дата</div>
<div class="t" style="left:391px;top:204px;font-size:13.9px;color:#2c3644;font-weight:normal;">Количество</div>
<div class="t" style="left:552px;top:204px;font-size:13.9px;color:#2c3644;font-weight:normal;">Цена</div>
<div class="t" style="left:713px;top:204px;font-size:13.9px;color:#2c3644;font-weight:normal;">Сумма</div>
<div class="a" style="left:210px;top:201px;width:16px;height:17px;background:linear-gradient(#fff,#f0f2f5);border:1px solid #a9b0ba"></div>
<svg style="left:212px;top:204px" width="12" height="11" viewBox="0 0 12 11"><path d="M2.5 1V10M0.8 8L2.5 10L4.2 8" stroke="#333" fill="none" stroke-width="1.2"/><path d="M5 1H12L9.5 5V10L7.5 9V5Z" fill="#444"/></svg>
<div class="a" style="left:371px;top:201px;width:16px;height:17px;background:linear-gradient(#fff,#f0f2f5);border:1px solid #a9b0ba"></div>
<svg style="left:376px;top:208px" width="7" height="4" viewBox="0 0 7 4"><path d="M0 0H7L3.5 4Z" fill="#4a5360"/></svg>
<div class="a" style="left:532px;top:201px;width:16px;height:17px;background:linear-gradient(#fff,#f0f2f5);border:1px solid #a9b0ba"></div>
<svg style="left:537px;top:208px" width="7" height="4" viewBox="0 0 7 4"><path d="M0 0H7L3.5 4Z" fill="#4a5360"/></svg>
<div class="a" style="left:693px;top:201px;width:16px;height:17px;background:linear-gradient(#fff,#f0f2f5);border:1px solid #a9b0ba"></div>
<svg style="left:698px;top:208px" width="7" height="4" viewBox="0 0 7 4"><path d="M0 0H7L3.5 4Z" fill="#4a5360"/></svg>
<div class="a" style="left:66px;top:219px;width:160px;height:19px;background:#92d050"></div>
<div class="a" style="left:65px;top:238px;width:758px;height:1px;background:#000"></div>
<div class="a" style="left:40px;top:238px;width:25px;height:1px;background:#c5cad1"></div>
<div class="t" style="left:42.5px;top:223px;font-size:13.2px;color:#0000ff;font-weight:normal;">235</div>
<div class="t" style="left:68px;top:223px;font-size:13.6px;color:#111;font-weight:normal;-webkit-text-stroke:.3px #111">Картофель</div>
<div class="t" style="left:275px;top:223.5px;font-size:12.8px;color:#111;font-weight:normal;-webkit-text-stroke:.3px #111">04.05.2016</div>
<div class="t" style="left:388px;width:160px;top:224px;font-size:12.5px;text-align:center;color:#111;font-weight:normal;-webkit-text-stroke:.3px #111">324</div>
<div class="t" style="left:549px;width:160px;top:224px;font-size:12.5px;text-align:center;color:#111;-webkit-text-stroke:.3px #111">45</div>
<div class="t" style="left:710px;width:90px;top:223.5px;font-size:12.7px;text-align:right;color:#111;font-weight:normal;-webkit-text-stroke:.3px #111">14589</div>
<div class="a" style="left:227px;top:239px;width:596px;height:19px;background:#dce6f1"></div>
<div class="a" style="left:66px;top:239px;width:160px;height:19px;background:#92d050"></div>
<div class="a" style="left:65px;top:258px;width:758px;height:1px;background:#000"></div>
<div class="a" style="left:40px;top:258px;width:25px;height:1px;background:#c5cad1"></div>
<div class="t" style="left:42.5px;top:243px;font-size:13.2px;color:#0000ff;font-weight:normal;">236</div>
<div class="t" style="left:68px;top:243px;font-size:13.6px;color:#111;font-weight:normal;-webkit-text-stroke:.3px #111">Картофель</div>
<div class="t" style="left:275px;top:243.5px;font-size:12.8px;color:#111;font-weight:normal;-webkit-text-stroke:.3px #111">04.05.2016</div>
<div class="t" style="left:388px;width:160px;top:244px;font-size:12.5px;text-align:center;color:#111;font-weight:normal;-webkit-text-stroke:.3px #111">324</div>
<div class="t" style="left:549px;width:160px;top:244px;font-size:12.5px;text-align:center;color:#111;-webkit-text-stroke:.3px #111">45</div>
<div class="t" style="left:710px;width:90px;top:243.5px;font-size:12.7px;text-align:right;color:#111;font-weight:normal;-webkit-text-stroke:.3px #111">14589</div>
<div class="a" style="left:66px;top:259px;width:160px;height:19px;background:#92d050"></div>
<div class="a" style="left:65px;top:278px;width:758px;height:1px;background:#000"></div>
<div class="a" style="left:40px;top:278px;width:25px;height:1px;background:#c5cad1"></div>
<div class="t" style="left:42.5px;top:263px;font-size:13.2px;color:#0000ff;font-weight:normal;">237</div>
<div class="t" style="left:68px;top:263px;font-size:13.6px;color:#111;font-weight:normal;-webkit-text-stroke:.3px #111">Картофель</div>
<div class="t" style="left:275px;top:263.5px;font-size:12.8px;color:#111;font-weight:normal;-webkit-text-stroke:.3px #111">06.05.2016</div>
<div class="t" style="left:388px;width:160px;top:264px;font-size:12.5px;text-align:center;color:#111;font-weight:normal;-webkit-text-stroke:.3px #111">279</div>
<div class="t" style="left:549px;width:160px;top:264px;font-size:12.5px;text-align:center;color:#111;-webkit-text-stroke:.3px #111">45</div>
<div class="t" style="left:710px;width:90px;top:263.5px;font-size:12.7px;text-align:right;color:#111;font-weight:normal;-webkit-text-stroke:.3px #111">12546</div>
<div class="a" style="left:227px;top:279px;width:596px;height:19px;background:#dce6f1"></div>
<div class="a" style="left:66px;top:279px;width:160px;height:19px;background:#92d050"></div>
<div class="a" style="left:65px;top:298px;width:758px;height:1px;background:#000"></div>
<div class="a" style="left:40px;top:298px;width:25px;height:1px;background:#c5cad1"></div>
<div class="t" style="left:42.5px;top:283px;font-size:13.2px;color:#0000ff;font-weight:normal;">238</div>
<div class="t" style="left:68px;top:283px;font-size:13.6px;color:#111;font-weight:normal;-webkit-text-stroke:.3px #111">Картофель</div>
<div class="t" style="left:275px;top:283.5px;font-size:12.8px;color:#111;font-weight:normal;-webkit-text-stroke:.3px #111">06.05.2016</div>
<div class="t" style="left:388px;width:160px;top:284px;font-size:12.5px;text-align:center;color:#111;font-weight:normal;-webkit-text-stroke:.3px #111">279</div>
<div class="t" style="left:549px;width:160px;top:284px;font-size:12.5px;text-align:center;color:#111;-webkit-text-stroke:.3px #111">45</div>
<div class="t" style="left:710px;width:90px;top:283.5px;font-size:12.7px;text-align:right;color:#111;font-weight:normal;-webkit-text-stroke:.3px #111">12546</div>
<div class="a" style="left:66px;top:299px;width:160px;height:19px;background:#92d050"></div>
<div class="a" style="left:65px;top:318px;width:758px;height:1px;background:#000"></div>
<div class="a" style="left:40px;top:318px;width:25px;height:1px;background:#c5cad1"></div>
<div class="t" style="left:42.5px;top:303px;font-size:13.2px;color:#0000ff;font-weight:normal;">239</div>
<div class="t" style="left:68px;top:303px;font-size:13.6px;color:#111;font-weight:normal;-webkit-text-stroke:.3px #111">Картофель</div>
<div class="t" style="left:275px;top:303.5px;font-size:12.8px;color:#111;font-weight:normal;-webkit-text-stroke:.3px #111">06.05.2016</div>
<div class="t" style="left:388px;width:160px;top:304px;font-size:12.5px;text-align:center;color:#111;font-weight:normal;-webkit-text-stroke:.3px #111">279</div>
<div class="t" style="left:549px;width:160px;top:304px;font-size:12.5px;text-align:center;color:#111;-webkit-text-stroke:.3px #111">45</div>
<div class="t" style="left:710px;width:90px;top:303.5px;font-size:12.7px;text-align:right;color:#111;font-weight:normal;-webkit-text-stroke:.3px #111">12546</div>
<div class="a" style="left:227px;top:319px;width:596px;height:19px;background:#dce6f1"></div>
<div class="a" style="left:66px;top:319px;width:160px;height:19px;background:#92d050"></div>
<div class="a" style="left:65px;top:338px;width:758px;height:1px;background:#000"></div>
<div class="a" style="left:40px;top:338px;width:25px;height:1px;background:#c5cad1"></div>
<div class="t" style="left:42.5px;top:323px;font-size:13.2px;color:#0000ff;font-weight:normal;">240</div>
<div class="t" style="left:68px;top:323px;font-size:13.6px;color:#111;font-weight:normal;-webkit-text-stroke:.3px #111">Картофель</div>
<div class="t" style="left:275px;top:323.5px;font-size:12.8px;color:#111;font-weight:normal;-webkit-text-stroke:.3px #111">06.05.2016</div>
<div class="t" style="left:388px;width:160px;top:324px;font-size:12.5px;text-align:center;color:#111;font-weight:normal;-webkit-text-stroke:.3px #111">279</div>
<div class="t" style="left:549px;width:160px;top:324px;font-size:12.5px;text-align:center;color:#111;-webkit-text-stroke:.3px #111">45</div>
<div class="t" style="left:710px;width:90px;top:323.5px;font-size:12.7px;text-align:right;color:#111;font-weight:normal;-webkit-text-stroke:.3px #111">12546</div>
<div class="a" style="left:66px;top:339px;width:160px;height:19px;background:#92d050"></div>
<div class="a" style="left:65px;top:358px;width:758px;height:1px;background:#000"></div>
<div class="a" style="left:40px;top:358px;width:25px;height:1px;background:#c5cad1"></div>
<div class="t" style="left:42.5px;top:343px;font-size:13.2px;color:#0000ff;font-weight:normal;">241</div>
<div class="t" style="left:68px;top:343px;font-size:13.6px;color:#111;font-weight:normal;-webkit-text-stroke:.3px #111">Картофель</div>
<div class="t" style="left:275px;top:343.5px;font-size:12.8px;color:#111;font-weight:normal;-webkit-text-stroke:.3px #111">06.05.2016</div>
<div class="t" style="left:388px;width:160px;top:344px;font-size:12.5px;text-align:center;color:#111;font-weight:normal;-webkit-text-stroke:.3px #111">279</div>
<div class="t" style="left:549px;width:160px;top:344px;font-size:12.5px;text-align:center;color:#111;-webkit-text-stroke:.3px #111">45</div>
<div class="t" style="left:710px;width:90px;top:343.5px;font-size:12.7px;text-align:right;color:#111;font-weight:normal;-webkit-text-stroke:.3px #111">12546</div>
<div class="a" style="left:227px;top:359px;width:596px;height:19px;background:#dce6f1"></div>
<div class="a" style="left:66px;top:359px;width:160px;height:19px;background:#92d050"></div>
<div class="a" style="left:65px;top:378px;width:758px;height:1px;background:#000"></div>
<div class="a" style="left:40px;top:378px;width:25px;height:1px;background:#c5cad1"></div>
<div class="t" style="left:42.5px;top:363px;font-size:13.2px;color:#0000ff;font-weight:normal;">242</div>
<div class="t" style="left:68px;top:363px;font-size:13.6px;color:#111;font-weight:normal;-webkit-text-stroke:.3px #111">Картофель</div>
<div class="t" style="left:275px;top:363.5px;font-size:12.8px;color:#111;font-weight:normal;-webkit-text-stroke:.3px #111">06.05.2016</div>
<div class="t" style="left:388px;width:160px;top:364px;font-size:12.5px;text-align:center;color:#111;font-weight:normal;-webkit-text-stroke:.3px #111">279</div>
<div class="t" style="left:549px;width:160px;top:364px;font-size:12.5px;text-align:center;color:#111;-webkit-text-stroke:.3px #111">45</div>
<div class="t" style="left:710px;width:90px;top:363.5px;font-size:12.7px;text-align:right;color:#111;font-weight:normal;-webkit-text-stroke:.3px #111">12546</div>
<div class="a" style="left:66px;top:379px;width:160px;height:19px;background:#92d050"></div>
<div class="a" style="left:65px;top:398px;width:758px;height:1px;background:#000"></div>
<div class="a" style="left:40px;top:398px;width:25px;height:1px;background:#c5cad1"></div>
<div class="t" style="left:42.5px;top:383px;font-size:13.2px;color:#0000ff;font-weight:normal;">243</div>
<div class="t" style="left:68px;top:383px;font-size:13.6px;color:#111;font-weight:normal;-webkit-text-stroke:.3px #111">Картофель</div>
<div class="t" style="left:275px;top:383.5px;font-size:12.8px;color:#111;font-weight:normal;-webkit-text-stroke:.3px #111">06.05.2016</div>
<div class="t" style="left:388px;width:160px;top:384px;font-size:12.5px;text-align:center;color:#111;font-weight:normal;-webkit-text-stroke:.3px #111">279</div>
<div class="t" style="left:549px;width:160px;top:384px;font-size:12.5px;text-align:center;color:#111;-webkit-text-stroke:.3px #111">45</div>
<div class="t" style="left:710px;width:90px;top:383.5px;font-size:12.7px;text-align:right;color:#111;font-weight:normal;-webkit-text-stroke:.3px #111">12546</div>
<div class="a" style="left:227px;top:399px;width:596px;height:19px;background:#dce6f1"></div>
<div class="a" style="left:66px;top:399px;width:160px;height:19px;background:#92d050"></div>
<div class="a" style="left:65px;top:418px;width:758px;height:1px;background:#000"></div>
<div class="a" style="left:40px;top:418px;width:25px;height:1px;background:#c5cad1"></div>
<div class="t" style="left:42.5px;top:403px;font-size:13.2px;color:#0000ff;font-weight:normal;">244</div>
<div class="t" style="left:68px;top:403px;font-size:13.6px;color:#111;font-weight:normal;-webkit-text-stroke:.3px #111">Картофель</div>
<div class="t" style="left:275px;top:403.5px;font-size:12.8px;color:#111;font-weight:normal;-webkit-text-stroke:.3px #111">06.05.2016</div>
<div class="t" style="left:388px;width:160px;top:404px;font-size:12.5px;text-align:center;color:#111;font-weight:normal;-webkit-text-stroke:.3px #111">279</div>
<div class="t" style="left:549px;width:160px;top:404px;font-size:12.5px;text-align:center;color:#111;-webkit-text-stroke:.3px #111">45</div>
<div class="t" style="left:710px;width:90px;top:403.5px;font-size:12.7px;text-align:right;color:#111;font-weight:normal;-webkit-text-stroke:.3px #111">12546</div>
<div class="a" style="left:66px;top:419px;width:160px;height:19px;background:#92d050"></div>
<div class="a" style="left:65px;top:438px;width:758px;height:1px;background:#000"></div>
<div class="a" style="left:40px;top:438px;width:25px;height:1px;background:#c5cad1"></div>
<div class="t" style="left:42.5px;top:423px;font-size:13.2px;color:#0000ff;font-weight:normal;">245</div>
<div class="t" style="left:68px;top:423px;font-size:13.6px;color:#111;font-weight:normal;-webkit-text-stroke:.3px #111">Картофель</div>
<div class="t" style="left:275px;top:423.5px;font-size:12.8px;color:#111;font-weight:normal;-webkit-text-stroke:.3px #111">06.05.2016</div>
<div class="t" style="left:388px;width:160px;top:424px;font-size:12.5px;text-align:center;color:#111;font-weight:normal;-webkit-text-stroke:.3px #111">279</div>
<div class="t" style="left:549px;width:160px;top:424px;font-size:12.5px;text-align:center;color:#111;-webkit-text-stroke:.3px #111">45</div>
<div class="t" style="left:710px;width:90px;top:423.5px;font-size:12.7px;text-align:right;color:#111;font-weight:normal;-webkit-text-stroke:.3px #111">12546</div>
<div class="a" style="left:227px;top:439px;width:596px;height:19px;background:#dce6f1"></div>
<div class="a" style="left:66px;top:439px;width:160px;height:19px;background:#92d050"></div>
<div class="a" style="left:65px;top:458px;width:758px;height:1px;background:#000"></div>
<div class="a" style="left:40px;top:458px;width:25px;height:1px;background:#c5cad1"></div>
<div class="t" style="left:42.5px;top:443px;font-size:13.2px;color:#0000ff;font-weight:normal;">246</div>
<div class="t" style="left:68px;top:443px;font-size:13.6px;color:#111;font-weight:normal;-webkit-text-stroke:.3px #111">Картофель</div>
<div class="t" style="left:275px;top:443.5px;font-size:12.8px;color:#111;font-weight:normal;-webkit-text-stroke:.3px #111">07.05.2016</div>
<div class="t" style="left:388px;width:160px;top:444px;font-size:12.5px;text-align:center;color:#111;font-weight:normal;-webkit-text-stroke:.3px #111">317</div>
<div class="t" style="left:549px;width:160px;top:444px;font-size:12.5px;text-align:center;color:#111;-webkit-text-stroke:.3px #111">45</div>
<div class="t" style="left:710px;width:90px;top:443.5px;font-size:12.7px;text-align:right;color:#111;font-weight:normal;-webkit-text-stroke:.3px #111">14256</div>
<div class="a" style="left:66px;top:459px;width:160px;height:19px;background:#92d050"></div>
<div class="a" style="left:65px;top:478px;width:758px;height:1px;background:#000"></div>
<div class="a" style="left:40px;top:478px;width:25px;height:1px;background:#c5cad1"></div>
<div class="t" style="left:42.5px;top:463px;font-size:13.2px;color:#0000ff;font-weight:normal;">247</div>
<div class="t" style="left:68px;top:463px;font-size:13.6px;color:#111;font-weight:normal;-webkit-text-stroke:.3px #111">Картофель</div>
<div class="t" style="left:275px;top:463.5px;font-size:12.8px;color:#111;font-weight:normal;-webkit-text-stroke:.3px #111">07.05.2016</div>
<div class="t" style="left:388px;width:160px;top:464px;font-size:12.5px;text-align:center;color:#111;font-weight:normal;-webkit-text-stroke:.3px #111">317</div>
<div class="t" style="left:549px;width:160px;top:464px;font-size:12.5px;text-align:center;color:#111;-webkit-text-stroke:.3px #111">45</div>
<div class="t" style="left:710px;width:90px;top:463.5px;font-size:12.7px;text-align:right;color:#111;font-weight:normal;-webkit-text-stroke:.3px #111">14256</div>
<div class="a" style="left:227px;top:479px;width:596px;height:19px;background:#dce6f1"></div>
<div class="a" style="left:66px;top:479px;width:160px;height:19px;background:#92d050"></div>
<div class="a" style="left:65px;top:498px;width:758px;height:1px;background:#000"></div>
<div class="a" style="left:40px;top:498px;width:25px;height:1px;background:#c5cad1"></div>
<div class="t" style="left:42.5px;top:483px;font-size:13.2px;color:#0000ff;font-weight:normal;">248</div>
<div class="t" style="left:68px;top:483px;font-size:13.6px;color:#111;font-weight:normal;-webkit-text-stroke:.3px #111">Картофель</div>
<div class="t" style="left:275px;top:483.5px;font-size:12.8px;color:#111;font-weight:normal;-webkit-text-stroke:.3px #111">07.05.2016</div>
<div class="t" style="left:388px;width:160px;top:484px;font-size:12.5px;text-align:center;color:#111;font-weight:normal;-webkit-text-stroke:.3px #111">317</div>
<div class="t" style="left:549px;width:160px;top:484px;font-size:12.5px;text-align:center;color:#111;-webkit-text-stroke:.3px #111">45</div>
<div class="t" style="left:710px;width:90px;top:483.5px;font-size:12.7px;text-align:right;color:#111;font-weight:normal;-webkit-text-stroke:.3px #111">14256</div>
<div class="a" style="left:66px;top:499px;width:160px;height:19px;background:#92d050"></div>
<div class="a" style="left:65px;top:518px;width:758px;height:1px;background:#000"></div>
<div class="a" style="left:40px;top:518px;width:25px;height:1px;background:#c5cad1"></div>
<div class="t" style="left:42.5px;top:503px;font-size:13.2px;color:#0000ff;font-weight:normal;">249</div>
<div class="t" style="left:68px;top:503px;font-size:13.6px;color:#111;font-weight:normal;-webkit-text-stroke:.3px #111">Картофель</div>
<div class="t" style="left:275px;top:503.5px;font-size:12.8px;color:#111;font-weight:normal;-webkit-text-stroke:.3px #111">07.05.2016</div>
<div class="t" style="left:388px;width:160px;top:504px;font-size:12.5px;text-align:center;color:#111;font-weight:normal;-webkit-text-stroke:.3px #111">317</div>
<div class="t" style="left:549px;width:160px;top:504px;font-size:12.5px;text-align:center;color:#111;-webkit-text-stroke:.3px #111">45</div>
<div class="t" style="left:710px;width:90px;top:503.5px;font-size:12.7px;text-align:right;color:#111;font-weight:normal;-webkit-text-stroke:.3px #111">14256</div>
<div class="a" style="left:227px;top:519px;width:596px;height:19px;background:#dce6f1"></div>
<div class="a" style="left:66px;top:519px;width:160px;height:19px;background:#92d050"></div>
<div class="a" style="left:65px;top:538px;width:758px;height:1px;background:#000"></div>
<div class="a" style="left:40px;top:538px;width:25px;height:1px;background:#c5cad1"></div>
<div class="t" style="left:42.5px;top:523px;font-size:13.2px;color:#0000ff;font-weight:normal;">250</div>
<div class="t" style="left:68px;top:523px;font-size:13.6px;color:#111;font-weight:normal;-webkit-text-stroke:.3px #111">Картофель</div>
<div class="t" style="left:275px;top:523.5px;font-size:12.8px;color:#111;font-weight:normal;-webkit-text-stroke:.3px #111">07.05.2016</div>
<div class="t" style="left:388px;width:160px;top:524px;font-size:12.5px;text-align:center;color:#111;font-weight:normal;-webkit-text-stroke:.3px #111">317</div>
<div class="t" style="left:549px;width:160px;top:524px;font-size:12.5px;text-align:center;color:#111;-webkit-text-stroke:.3px #111">45</div>
<div class="t" style="left:710px;width:90px;top:523.5px;font-size:12.7px;text-align:right;color:#111;font-weight:normal;-webkit-text-stroke:.3px #111">14256</div>
<div class="a" style="left:66px;top:539px;width:160px;height:19px;background:#92d050"></div>
<div class="a" style="left:65px;top:558px;width:758px;height:1px;background:#000"></div>
<div class="a" style="left:40px;top:558px;width:25px;height:1px;background:#c5cad1"></div>
<div class="t" style="left:42.5px;top:543px;font-size:13.2px;color:#0000ff;font-weight:normal;">251</div>
<div class="t" style="left:68px;top:543px;font-size:13.6px;color:#111;font-weight:normal;-webkit-text-stroke:.3px #111">Картофель</div>
<div class="t" style="left:275px;top:543.5px;font-size:12.8px;color:#111;font-weight:normal;-webkit-text-stroke:.3px #111">07.05.2016</div>
<div class="t" style="left:388px;width:160px;top:544px;font-size:12.5px;text-align:center;color:#111;font-weight:normal;-webkit-text-stroke:.3px #111">317</div>
<div class="t" style="left:549px;width:160px;top:544px;font-size:12.5px;text-align:center;color:#111;-webkit-text-stroke:.3px #111">45</div>
<div class="t" style="left:710px;width:90px;top:543.5px;font-size:12.7px;text-align:right;color:#111;font-weight:normal;-webkit-text-stroke:.3px #111">14256</div>
<div class="a" style="left:227px;top:559px;width:596px;height:19px;background:#dce6f1"></div>
<div class="a" style="left:66px;top:559px;width:160px;height:19px;background:#92d050"></div>
<div class="a" style="left:65px;top:578px;width:758px;height:1px;background:#000"></div>
<div class="a" style="left:40px;top:578px;width:25px;height:1px;background:#c5cad1"></div>
<div class="t" style="left:42.5px;top:563px;font-size:13.2px;color:#0000ff;font-weight:normal;">252</div>
<div class="t" style="left:68px;top:563px;font-size:13.6px;color:#111;font-weight:normal;-webkit-text-stroke:.3px #111">Картофель</div>
<div class="t" style="left:275px;top:563.5px;font-size:12.8px;color:#111;font-weight:normal;-webkit-text-stroke:.3px #111">07.05.2016</div>
<div class="t" style="left:388px;width:160px;top:564px;font-size:12.5px;text-align:center;color:#111;font-weight:normal;-webkit-text-stroke:.3px #111">317</div>
<div class="t" style="left:549px;width:160px;top:564px;font-size:12.5px;text-align:center;color:#111;-webkit-text-stroke:.3px #111">45</div>
<div class="t" style="left:710px;width:90px;top:563.5px;font-size:12.7px;text-align:right;color:#111;font-weight:normal;-webkit-text-stroke:.3px #111">14256</div>
<div class="a" style="left:66px;top:579px;width:160px;height:19px;background:#92d050"></div>
<div class="a" style="left:65px;top:598px;width:758px;height:1px;background:#000"></div>
<div class="a" style="left:40px;top:598px;width:25px;height:1px;background:#c5cad1"></div>
<div class="t" style="left:42.5px;top:583px;font-size:13.2px;color:#0000ff;font-weight:normal;">253</div>
<div class="t" style="left:68px;top:583px;font-size:13.6px;color:#111;font-weight:normal;-webkit-text-stroke:.3px #111">Картофель</div>
<div class="t" style="left:275px;top:583.5px;font-size:12.8px;color:#111;font-weight:normal;-webkit-text-stroke:.3px #111">07.05.2016</div>
<div class="t" style="left:388px;width:160px;top:584px;font-size:12.5px;text-align:center;color:#111;font-weight:normal;-webkit-text-stroke:.3px #111">317</div>
<div class="t" style="left:549px;width:160px;top:584px;font-size:12.5px;text-align:center;color:#111;-webkit-text-stroke:.3px #111">45</div>
<div class="t" style="left:710px;width:90px;top:583.5px;font-size:12.7px;text-align:right;color:#111;font-weight:normal;-webkit-text-stroke:.3px #111">14256</div>
<div class="a" style="left:227px;top:599px;width:596px;height:19px;background:#dce6f1"></div>
<div class="a" style="left:66px;top:599px;width:160px;height:19px;background:#92d050"></div>
<div class="a" style="left:65px;top:618px;width:758px;height:1px;background:#000"></div>
<div class="a" style="left:40px;top:618px;width:25px;height:1px;background:#c5cad1"></div>
<div class="t" style="left:42.5px;top:603px;font-size:13.2px;color:#0000ff;font-weight:normal;">254</div>
<div class="t" style="left:68px;top:603px;font-size:13.6px;color:#111;font-weight:normal;-webkit-text-stroke:.3px #111">Картофель</div>
<div class="t" style="left:275px;top:603.5px;font-size:12.8px;color:#111;font-weight:normal;-webkit-text-stroke:.3px #111">07.05.2016</div>
<div class="t" style="left:388px;width:160px;top:604px;font-size:12.5px;text-align:center;color:#111;font-weight:normal;-webkit-text-stroke:.3px #111">317</div>
<div class="t" style="left:549px;width:160px;top:604px;font-size:12.5px;text-align:center;color:#111;-webkit-text-stroke:.3px #111">45</div>
<div class="t" style="left:710px;width:90px;top:603.5px;font-size:12.7px;text-align:right;color:#111;font-weight:normal;-webkit-text-stroke:.3px #111">14256</div>
<div class="a" style="left:66px;top:619px;width:160px;height:19px;background:#92d050"></div>
<div class="a" style="left:65px;top:638px;width:758px;height:1px;background:#000"></div>
<div class="a" style="left:40px;top:638px;width:25px;height:1px;background:#c5cad1"></div>
<div class="t" style="left:42.5px;top:623px;font-size:13.2px;color:#333;font-weight:normal;">255</div>
<div class="t" style="left:68px;top:623px;font-size:13.6px;color:#111;font-weight:bold;-webkit-text-stroke:.3px #111">Итог</div>
<div class="t" style="left:388px;width:160px;top:624px;font-size:12.5px;text-align:center;color:#111;font-weight:bold;-webkit-text-stroke:.3px #111">53</div>
<div class="t" style="left:710px;width:94px;top:623.5px;font-size:12.7px;text-align:right;color:#111;font-weight:bold;-webkit-text-stroke:.3px #111">702895</div>
<div class="a" style="left:40px;top:658px;width:25px;height:1px;background:#c5cad1"></div>
<div class="a" style="left:66px;top:658px;width:757px;height:1px;background:#dadcdd"></div>
<div class="t" style="left:42.5px;top:643px;font-size:13.2px;color:#333;font-weight:normal;">256</div>
<div class="a" style="left:40px;top:678px;width:25px;height:1px;background:#c5cad1"></div>
<div class="a" style="left:66px;top:678px;width:757px;height:1px;background:#dadcdd"></div>
<div class="t" style="left:42.5px;top:663px;font-size:13.2px;color:#333;font-weight:normal;">257</div>
<div class="a" style="left:40px;top:698px;width:25px;height:1px;background:#c5cad1"></div>
<div class="a" style="left:66px;top:698px;width:757px;height:1px;background:#dadcdd"></div>
<div class="t" style="left:42.5px;top:683px;font-size:13.2px;color:#333;font-weight:normal;">258</div>
<div class="a" style="left:40px;top:718px;width:25px;height:1px;background:#c5cad1"></div>
<div class="a" style="left:66px;top:718px;width:757px;height:1px;background:#dadcdd"></div>
<div class="t" style="left:42.5px;top:703px;font-size:13.2px;color:#333;font-weight:normal;">259</div>
<div class="a" style="left:226px;top:219px;width:1px;height:420px;background:#000"></div>
<div class="a" style="left:226px;top:639px;width:1px;height:83px;background:#dadcdd"></div>
<div class="a" style="left:387px;top:219px;width:1px;height:420px;background:#000"></div>
<div class="a" style="left:387px;top:639px;width:1px;height:83px;background:#dadcdd"></div>
<div class="a" style="left:548px;top:219px;width:1px;height:420px;background:#000"></div>
<div class="a" style="left:548px;top:639px;width:1px;height:83px;background:#dadcdd"></div>
<div class="a" style="left:709px;top:219px;width:1px;height:420px;background:#000"></div>
<div class="a" style="left:709px;top:639px;width:1px;height:83px;background:#dadcdd"></div>
<div class="a" style="left:823px;top:199px;width:16px;height:522px;background:linear-gradient(90deg,#dfe3e8,#eceff2)"></div>
<div class="a" style="left:824px;top:200px;width:14px;height:7px;background:#fff;border:1px solid #8a94a0"></div>
<div class="a" style="left:827px;top:203px;width:8px;height:1px;background:#6a7480"></div>
<svg style="left:826px;top:213px" width="10" height="5" viewBox="0 0 10 5"><path d="M0 5L5 0L10 5Z" fill="#3d4856"/></svg>
<div class="a" style="left:823px;top:659px;width:15px;height:46px;background:linear-gradient(90deg,#f4f6f8,#e6e9ed);border:1px solid #8f98a3;border-radius:2px"></div>
<div class="a" style="left:830px;top:662px;width:1px;height:40px;background:#d3d8de"></div>
<div class="a" style="left:827px;top:678px;width:8px;height:1px;background:#6a7480"></div>
<div class="a" style="left:827px;top:680px;width:8px;height:1px;background:#6a7480"></div>
<div class="a" style="left:827px;top:682px;width:8px;height:1px;background:#6a7480"></div>
<div class="a" style="left:827px;top:684px;width:8px;height:1px;background:#6a7480"></div>
<svg style="left:826px;top:711px" width="10" height="5" viewBox="0 0 10 5"><path d="M0 0H10L5 5Z" fill="#3d4856"/></svg>
<div class="a" style="left:823px;top:721px;width:16px;height:17px;background:#e4e7eb;border-top:1px solid #c5cad0"></div>
<div class="a" style="left:39px;top:722px;width:784px;height:16px;background:linear-gradient(#e6e9ed,#dde1e6);border-top:1px solid #a9afb7"></div>
<div class="a" style="left:39px;top:738px;width:801px;height:1px;background:#a3a8ae"></div>
<div class="a" style="left:39px;top:722px;width:64px;height:16px;background:linear-gradient(#e8ebef,#dde1e6);border-top:1px solid #a9afb7;border-right:1px solid #a9afb7"></div>
<svg style="left:46px;top:726px" width="7" height="8" viewBox="0 0 7 8"><rect x="0" y="0" width="1.4" height="8" fill="#2f3d48"/><path d="M6.5 0V8L2 4Z" fill="#2f3d48"/></svg>
<svg style="left:62px;top:726px" width="5" height="8" viewBox="0 0 5 8"><path d="M4.5 0V8L0 4Z" fill="#2f3d48"/></svg>
<svg style="left:76px;top:726px" width="5" height="8" viewBox="0 0 5 8"><path d="M0 0V8L4.5 4Z" fill="#2f3d48"/></svg>
<svg style="left:89px;top:726px" width="7" height="8" viewBox="0 0 7 8"><path d="M0 0V8L4.5 4Z" fill="#2f3d48"/><rect x="5" y="0" width="1.4" height="8" fill="#2f3d48"/></svg>
<svg style="left:103px;top:718px" width="380" height="21" viewBox="0 0 380 21"><defs><linearGradient id="tg" x1="0" y1="0" x2="0" y2="1"><stop offset="0" stop-color="#eceff2"/><stop offset="1" stop-color="#dde1e6"/></linearGradient></defs><path d="M133 20H202L216.5 5H147.5Z" fill="url(#tg)"/><path d="M133 20L147.5 5H216.5" fill="none" stroke="#a4acb6"/><path d="M202 20H268L282.5 5H216.5Z" fill="url(#tg)"/><path d="M202 20L216.5 5H282.5" fill="none" stroke="#a4acb6"/><path d="M268 20H324L338.5 5H282.5Z" fill="url(#tg)"/><path d="M268 20L282.5 5H338.5" fill="none" stroke="#a4acb6"/><path d="M324 20H356L370.5 5H338.5Z" fill="url(#tg)"/><path d="M324 20L338.5 5H370.5" fill="none" stroke="#a4acb6"/><path d="M356 20L370.5 5" fill="none" stroke="#a4acb6"/><path d="M0.5 20V0H133L147.5 0V5L133 20Z" fill="#fff"/><path d="M133 20L147.5 5" fill="none" stroke="#8e98a4"/></svg>
<div class="t" style="left:112px;top:722.5px;font-size:13px;color:#222;font-weight:bold;">Продукты питания</div>
<div class="t" style="left:251px;top:725px;font-size:11.9px;color:#2a3540;font-weight:normal;">Таблица</div>
<div class="t" style="left:317px;top:725px;font-size:12.2px;color:#2a3540;font-weight:normal;">Рассчет</div>
<div class="t" style="left:384px;top:725px;font-size:11.6px;color:#2a3540;font-weight:normal;">Вывод</div>
<svg style="left:441px;top:723px" width="15" height="13" viewBox="0 0 15 13"><path d="M2 3.5H14V10.5H6L3 13V10.5H2Z" fill="#e8f0fa" stroke="#3a6ab0"/><circle cx="4" cy="3.5" r="3" fill="#f0a020"/></svg>
<div class="a" style="left:510px;top:723px;width:8px;height:15px;background:#fff;border:1px solid #7f8893"></div>
<div class="a" style="left:513px;top:726px;width:1px;height:9px;background:#556"></div>
<svg style="left:522px;top:725px" width="6" height="10" viewBox="0 0 6 10"><path d="M6 0V10L0 5Z" fill="#2f3d48"/></svg>
<div class="a" style="left:535px;top:722px;width:196px;height:15px;background:linear-gradient(#f5f7f9,#e4e8ec);border:1px solid #8f98a3;border-radius:2px"></div>
<div class="a" style="left:630px;top:726px;width:1px;height:7px;background:#6a7480"></div>
<div class="a" style="left:632px;top:726px;width:1px;height:7px;background:#6a7480"></div>
<div class="a" style="left:634px;top:726px;width:1px;height:7px;background:#6a7480"></div>
<div class="a" style="left:636px;top:726px;width:1px;height:7px;background:#6a7480"></div>
<svg style="left:804px;top:725px" width="6" height="10" viewBox="0 0 6 10"><path d="M0 0V10L6 5Z" fill="#2f3d48"/></svg>
<div class="a" style="left:815px;top:723px;width:8px;height:15px;background:#fff;border:1px solid #7f8893"></div>
<div class="a" style="left:818px;top:726px;width:1px;height:9px;background:#556"></div>
<div class="a" style="left:39px;top:739px;width:801px;height:22px;background:linear-gradient(#eceef1,#e2e5e9 35%,#d6d9de 70%,#c8cbd0);border-left:1px solid #7f848c;border-bottom:1px solid #5e6670;border-radius:0 0 0 3px"></div>
<div class="t" style="left:48px;top:744px;font-size:11.8px;color:#2f3b48;font-weight:normal;">Готово</div>
<div class="t" style="left:102px;top:744px;font-size:11.3px;color:#2f3b48;font-weight:normal;">Найдено записей: 53 из 253</div>
<div class="a" style="left:257px;top:741px;width:1px;height:17px;background:#b3b9c1"></div>
<svg style="left:266px;top:742px" width="16" height="14" viewBox="0 0 16 14"><rect x="0.5" y="2.5" width="15" height="11" fill="#fff" stroke="#3a6ab0"/><path d="M0.5 5.5H15.5M0.5 8.5H15.5M0.5 11H15.5M5 2.5V13.5M10 2.5V13.5" stroke="#5a8ad0"/><circle cx="3" cy="3" r="2.5" fill="#e06030"/></svg>
<div class="a" style="left:292px;top:741px;width:1px;height:17px;background:#b3b9c1"></div>
<div class="a" style="left:583px;top:741px;width:1px;height:17px;background:#b3b9c1"></div>
<div class="a" style="left:587px;top:740px;width:19px;height:18px;background:linear-gradient(#fde9a8,#fbd36a);border:1px solid #d7a94a;border-radius:2px"></div>
<svg style="left:590px;top:743px" width="13" height="11" viewBox="0 0 13 11"><rect x="0.5" y="0.5" width="12" height="10" fill="#fff" stroke="#333"/><path d="M0.5 4H12.5M0.5 7.5H12.5M4.5 0.5V10.5M8.5 0.5V10.5" stroke="#333"/></svg>
<svg style="left:608px;top:742px" width="14" height="14" viewBox="0 0 14 14"><rect x="0.5" y="0.5" width="13" height="13" fill="#e8ebef" stroke="#555"/><rect x="3.5" y="3.5" width="7" height="7" fill="#fff" stroke="#555"/></svg>
<svg style="left:626px;top:742px" width="14" height="14" viewBox="0 0 14 14"><rect x="0.5" y="0.5" width="13" height="13" fill="#fff" stroke="#555"/><path d="M7 0.5V13.5M0.5 8H13.5" stroke="#555"/><rect x="7" y="8" width="6.5" height="5.5" fill="#999"/></svg>
<div class="t" style="left:652px;top:744px;font-size:11.3px;color:#2f3b48;font-weight:normal;">100%</div>
<svg style="left:689px;top:741px" width="16" height="16" viewBox="0 0 16 16"><circle cx="8" cy="8" r="7.5" fill="#f6f7f9" stroke="#7a838e"/><rect x="4" y="7" width="8" height="2" fill="#333"/></svg>
<div class="a" style="left:704px;top:748px;width:101px;height:1px;background:#9aa2ac"></div>
<svg style="left:750px;top:742px" width="10" height="13" viewBox="0 0 10 13"><path d="M0.5 0.5H9.5V8L5 12.5L0.5 8Z" fill="#f6f7f9" stroke="#6a737e"/></svg>
<svg style="left:805px;top:741px" width="16" height="16" viewBox="0 0 16 16"><circle cx="8" cy="8" r="7.5" fill="#f6f7f9" stroke="#7a838e"/><rect x="4" y="7" width="8" height="2" fill="#333"/><rect x="7" y="4" width="2" height="8" fill="#333"/></svg>
<svg style="left:829px;top:749px" width="10" height="10" viewBox="0 0 10 10"><rect x="7" y="1" width="2" height="2" fill="#a0a8b2"/><rect x="4" y="4" width="2" height="2" fill="#a0a8b2"/><rect x="7" y="4" width="2" height="2" fill="#a0a8b2"/><rect x="1" y="7" width="2" height="2" fill="#a0a8b2"/><rect x="4" y="7" width="2" height="2" fill="#a0a8b2"/><rect x="7" y="7" width="2" height="2" fill="#a0a8b2"/></svg>
<div class="a" style="left:39px;top:169px;width:1px;height:570px;background:#8d959e"></div>
<div class="a" style="left:839px;top:169px;width:1px;height:570px;background:#8d959e"></div>
<div class="a" style="left:382px;top:618px;width:170px;height:30px;border:5px solid #f00;border-radius:13px;filter:drop-shadow(3px 4px 2.5px rgba(0,0,0,.5))"></div>
<div class="a" style="left:706px;top:616px;width:124px;height:31px;border:5px solid #f00;border-radius:13px;filter:drop-shadow(3px 4px 2.5px rgba(0,0,0,.5))"></div></body></html>
